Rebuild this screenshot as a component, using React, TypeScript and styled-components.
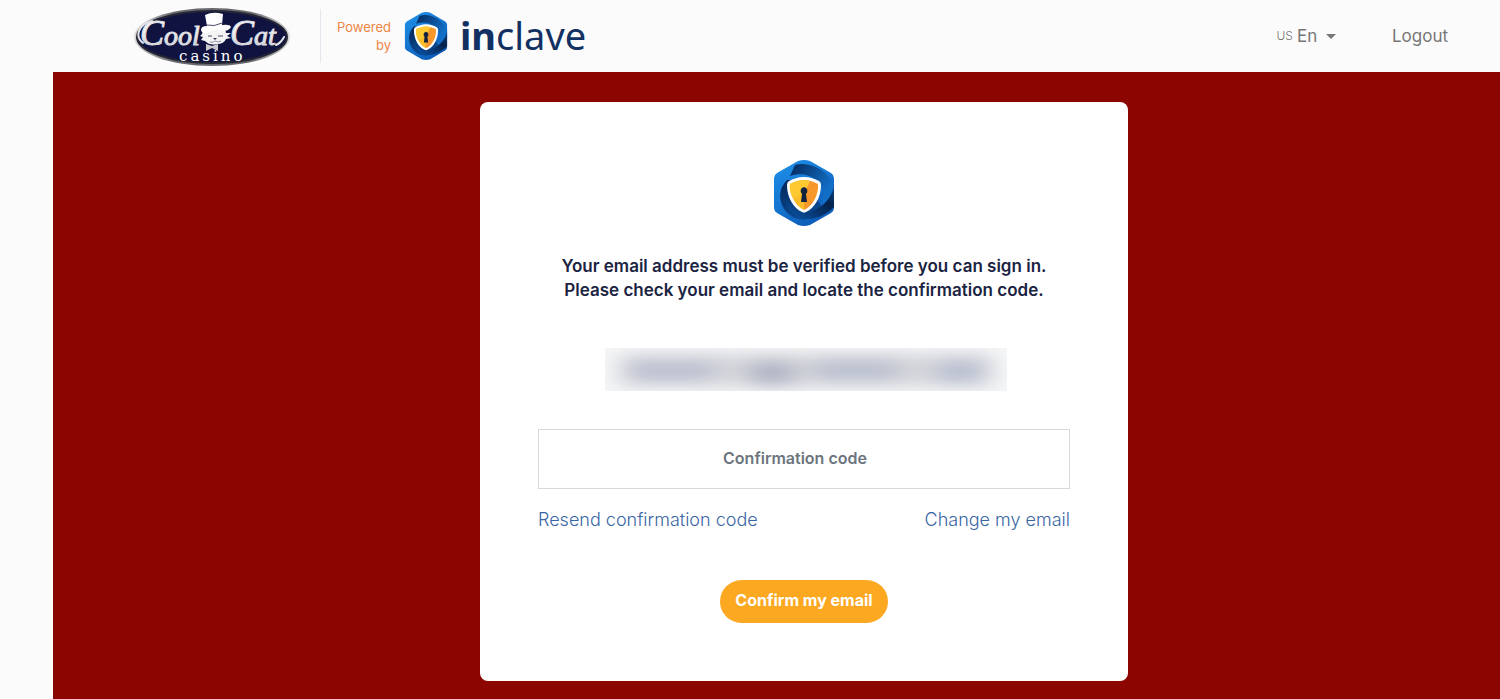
import React, { useId } from "react";
import styled, { createGlobalStyle } from "styled-components";

const GlobalStyle = createGlobalStyle`
  *, *::before, *::after { box-sizing: border-box; }
  html, body, #root { min-height: 100vh; }
  body {
    margin: 0;
    background: #fbfbfb;
    font-family: Inter, "Open Sans", sans-serif;
  }
`;

const Page = styled.div`
  min-height: 100vh;
  display: flex;
  flex-direction: column;
`;

const Header = styled.header`
  height: 72px;
  padding: 0 52px 0 132px;
  display: flex;
  align-items: center;
  justify-content: space-between;
  background: #fbfbfb;
`;

const Brand = styled.div`
  display: flex;
  align-items: center;
`;

const BrandDivider = styled.span`
  width: 1px;
  height: 54px;
  margin: 0 16px 0 30px;
  background: #e6e7ee;
`;

const PoweredBy = styled.span`
  width: 54px;
  margin-right: 13px;
  font-size: 13px;
  line-height: 18px;
  text-align: right;
  color: #ee8545;
`;

const Wordmark = styled.span`
  margin-left: 12px;
  padding-bottom: 2px;
  font-family: "Noto Sans", sans-serif;
  font-size: 38px;
  line-height: 48px;
  font-weight: 400;
  color: #123061;

  b { font-weight: 700; }
`;

const Nav = styled.nav`
  display: flex;
  align-items: center;
  gap: 56px;
  font-size: 17px;
  line-height: 24px;
  color: #777;
`;

const Language = styled.label`
  display: flex;
  align-items: center;
  gap: 4px;
`;

const Country = styled.span`
  font-size: 12px;
  font-weight: 300;
`;

const LanguageSelect = styled.select`
  appearance: none;
  padding: 0;
  margin-right: 4px;
  border: 0;
  background: transparent;
  font: inherit;
  color: inherit;
`;

const LogoutLink = styled.a`
  color: inherit;
  text-decoration: none;
`;

const Main = styled.main`
  flex: 1;
  margin-left: 53px;
  padding: 30px 0 18px 55px;
  display: flex;
  justify-content: center;
  align-items: flex-start;
  background: #8b0600;
`;

const Card = styled.form`
  width: 100%;
  max-width: 648px;
  padding: 58px;
  display: flex;
  flex-direction: column;
  align-items: center;
  border-radius: 8px;
  background: #fff;
`;

const Message = styled.p`
  margin: 28px 0 46px;
  font-size: 17px;
  line-height: 24px;
  font-weight: 600;
  text-align: center;
  color: #1b2442;
`;

const HiddenEmail = styled.svg`
  display: block;
  margin: 0 0 38px 4px;
`;

const CodeInput = styled.input`
  width: 100%;
  height: 60px;
  padding: 0 34px 2px 16px;
  border: 1px solid #d5dada;
  border-radius: 0;
  background: #fff;
  font-family: inherit;
  font-size: 16px;
  font-weight: 600;
  text-align: center;
  color: #6c757d;

  &::placeholder { color: #6c757d; opacity: 1; }
`;

const Links = styled.div`
  width: 100%;
  margin: 19px 0 48px;
  display: flex;
  justify-content: space-between;
`;

const TextLink = styled.a`
  font-size: 18px;
  line-height: 24px;
  font-weight: 300;
  color: #3965a5;
  text-decoration: none;
`;

const ConfirmButton = styled.button`
  height: 43px;
  padding: 0 15px 3px;
  border: 0;
  border-radius: 22px;
  background: #fca821;
  font-family: inherit;
  font-size: 16px;
  font-weight: 700;
  color: #fff;
`;

function ShieldLogo({ width, height }: { width: number; height: number }) {
  const id = useId();
  const ref = (name: string) => `url(#${id}${name})`;
  return (
    <svg width={width} height={height} viewBox="0 0 62 66" preserveAspectRatio="none" aria-hidden="true">
      <defs>
        <linearGradient id={`${id}hex`} x1="0" y1="0" x2="0.6" y2="1">
          <stop offset="0" stopColor="#1f93ec" />
          <stop offset="1" stopColor="#0c5cb8" />
        </linearGradient>
        <linearGradient id={`${id}top`} x1="0" y1="0" x2="1" y2="0.6">
          <stop offset="0.1" stopColor="#063068" />
          <stop offset="0.9" stopColor="#126fc6" />
        </linearGradient>
        <linearGradient id={`${id}low`} x1="1" y1="0" x2="0.2" y2="1">
          <stop offset="0" stopColor="#0c57a8" />
          <stop offset="0.45" stopColor="#04214a" />
          <stop offset="1" stopColor="#0b4f9f" />
        </linearGradient>
        <linearGradient id={`${id}left`} x1="0.3" y1="0" x2="0.6" y2="1">
          <stop offset="0" stopColor="#05295a" />
          <stop offset="1" stopColor="#0b4d9b" />
        </linearGradient>
        <clipPath id={`${id}clip`}>
          <path d="M25 1Q31-1 37 1L58 13Q61 15 61 18V48Q61 51 58 53L37 65Q31 67 25 65L4 53Q1 51 1 48V18Q1 15 4 13Z" />
        </clipPath>
      </defs>
      <g clipPath={ref("clip")}>
        <path fill={ref("hex")} d="M0 0H62V66H0Z" />
        <path fill={ref("left")} d="M14 20C6 28 5 39 11 49C16 56 23 60 32 60L50 48L30 20Z" />
        <path fill={ref("top")} d="M22 5C32 2 44 6 52 13C58 18 62 25 62 32V36L48 44C53 34 50 25 42 19C35 14 26 13 17 16Z" />
        <path fill={ref("low")} d="M62 19C61 34 53 45 42 50C36 53 28 52 22 49C18 46 15 43 13 39C14 49 21 57 32 59C45 60 55 53 62 46Z" />
      </g>
      <path fill="#fff" d="M31 17C37 17 42 19 46 21Q48 22 48 25C48 37 42 48 33 52Q31 53 29 52C20 48 14 37 14 25Q14 22 16 21C20 19 25 17 31 17Z" />
      <path fill="#fdbd2b" d="M31 20C26 20 21 22 17 24C16 34 22 46 31 50Z" />
      <path fill="#f6982c" d="M31 20C36 20 41 22 45 24C46 34 40 46 31 50Z" />
      <path fill="#ffca31" d="M31 20C26 20 21 22 17 24C16 29 18 34 20 38C27 36 34 30 37 21Q34 20 31 20Z" />
      <path fill="#11233d" d="M31 27A4 4 0 0 1 33 34L34 42H28L29 34A4 4 0 0 1 31 27Z" />
    </svg>
  );
}

function CasinoLogo() {
  return (
    <svg width="158" height="60" viewBox="0 0 158 60" role="img" aria-label="Cool Cat Casino">
      <defs>
        <linearGradient id="silver" x1="0" y1="0" x2="0" y2="1">
          <stop offset="0.2" stopColor="#fff" />
          <stop offset="0.6" stopColor="#e6e6e9" />
          <stop offset="1" stopColor="#b0b1b8" />
        </linearGradient>
        <linearGradient id="rim" x1="0" y1="0" x2="1" y2="0">
          <stop offset="0" stopColor="#ddd" />
          <stop offset="0.25" stopColor="#68686e" />
          <stop offset="0.75" stopColor="#68686e" />
          <stop offset="1" stopColor="#ddd" />
        </linearGradient>
      </defs>
      <ellipse cx="80" cy="31" rx="78" ry="29" fill="url(#rim)" />
      <ellipse cx="80" cy="31" rx="75" ry="26" fill="#10133f" stroke="#252735" strokeWidth="2" />
      <g fontFamily="'Liberation Serif', serif" fontStyle="italic" fill="url(#silver)" stroke="#dcdce0" strokeWidth="1">
        <text x="8" y="39" fontSize="36">C</text>
        <text x="32" y="39" fontSize="28">ool</text>
        <text x="98" y="39" fontSize="36">C</text>
        <text x="122" y="39" fontSize="28">at</text>
      </g>
      <path fill="none" stroke="#e4e4e8" strokeWidth="2" strokeLinecap="round" d="M11 37C2 30 7 18 20 15M144 39Q149 37 152 31" />
      <path fill="#c9c9ce" d="M74 38L80 40L86 38V45L80 42L74 45Z" />
      <path fill="#f4f4f5" d="M72 23L70 28L68 30L71 31L69 34L73 35Q78 40 85 38Q92 38 94 33L99 32L95 30L99 27L94 27L93 22Z" />
      <path fill="#fff" d="M75 20L73 9Q81 5 91 8L90 19Q98 18 99 21Q97 25 91 25Q82 22 75 27Q70 28 69 24Q69 20 75 20Z" />
      <path fill="none" stroke="#4c4e68" strokeWidth="1" d="M75 19Q82 21 90 17M76 30L80 30M86 30L91 30" />
      <path fill="#343650" d="M81 32H85L83 34Z" />
      <path fill="none" stroke="#9294a0" strokeWidth="1" d="M78 36Q81 37 83 35Q86 37 89 35" />
      <text x="47" y="55" fontFamily="'DejaVu Serif', serif" fontSize="15" letterSpacing="3" fill="#fff">casino</text>
    </svg>
  );
}

export default function App() {
  return (
    <Page>
      <GlobalStyle />
      <Header>
        <Brand>
          <CasinoLogo />
          <BrandDivider />
          <PoweredBy>Powered by</PoweredBy>
          <ShieldLogo width={44} height={48} />
          <Wordmark><b>in</b>clave</Wordmark>
        </Brand>
        <Nav>
          <Language>
            <Country>US</Country>
            <LanguageSelect aria-label="Language" defaultValue="en">
              <option value="en">En</option>
            </LanguageSelect>
            <svg width="10" height="5" viewBox="0 0 10 5" aria-hidden="true">
              <path fill="#777" d="M0 0H10L5 5Z" />
            </svg>
          </Language>
          <LogoutLink href="#logout">Logout</LogoutLink>
        </Nav>
      </Header>
      <Main>
        <Card onSubmit={(event: React.FormEvent) => event.preventDefault()}>
          <ShieldLogo width={62} height={66} />
          <Message>
            Your email address must be verified before you can sign in.
            <br />
            Please check your email and locate the confirmation code.
          </Message>
          <HiddenEmail width="402" height="43" viewBox="0 0 402 43" role="img" aria-label="Hidden email address">
            <defs>
              <filter id="soften" x="-20%" y="-100%" width="140%" height="300%">
                <feGaussianBlur stdDeviation="12 8" />
              </filter>
            </defs>
            <rect width="402" height="43" fill="#f6f7f8" />
            <g filter="url(#soften)">
              <rect x="14" y="6" width="374" height="32" fill="#d3d4d9" />
              <rect x="26" y="13" width="82" height="20" fill="#bbc0d0" />
              <rect x="145" y="14" width="44" height="24" fill="#afb3c4" />
              <rect x="210" y="11" width="82" height="22" fill="#bcc1d0" />
              <rect x="334" y="13" width="42" height="22" fill="#b8bed0" />
            </g>
          </HiddenEmail>
          <CodeInput type="text" aria-label="Confirmation code" placeholder="Confirmation code" />
          <Links>
            <TextLink href="#resend">Resend confirmation code</TextLink>
            <TextLink href="#change">Change my email</TextLink>
          </Links>
          <ConfirmButton type="submit">Confirm my email</ConfirmButton>
        </Card>
      </Main>
    </Page>
  );
}
